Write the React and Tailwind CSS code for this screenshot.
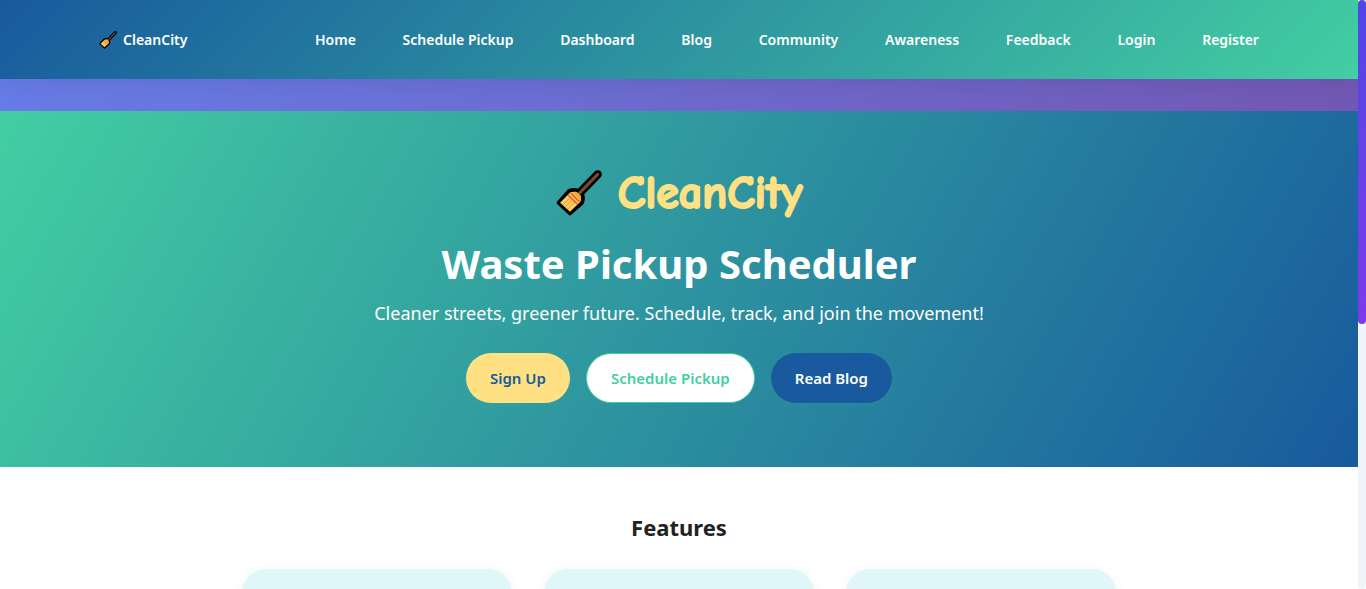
const links = ['Home', 'Schedule Pickup', 'Dashboard', 'Blog', 'Community', 'Awareness', 'Feedback', 'Login', 'Register'];
const features = ['Pickup scheduling', 'Live tracking', 'Community'];

function Broom({ className }) {
  return (
    <svg viewBox="24 14 138 138" className={className} aria-hidden="true">
      <path d="M92 86 L149 27" stroke="#000" strokeWidth="25" strokeLinecap="round" />
      <path d="M31 112 L63 76 Q78 70 91 76 L104 89 Q108 102 102 114 L66 145 Z" fill="#000" stroke="#000" strokeWidth="10" strokeLinejoin="round" />
      <path d="M92 86 L149 27" stroke="#7d4b32" strokeWidth="9" strokeLinecap="round" />
      <path d="M36 112 L67 81 Q79 77 88 82 L98 92 Q100 102 97 110 L66 139 Z" fill="#fbc04f" />
      <path d="M76 80 Q84 78 89 82 L98 91 Q101 100 97 108 Z" fill="#f5a93c" />
      <path d="M42 113 L66 88 M49 120 L73 96 M56 127 L80 103 M63 134 L88 110" stroke="#ffe39a" strokeWidth="3" />
      <path d="M46 118 L70 93 M53 125 L77 101 M60 131 L84 107" stroke="#e99a2b" strokeWidth="2" />
      <path d="M60 89 L88 117 M69 84 L94 109" stroke="#e5532d" strokeWidth="4" />
    </svg>
  );
}

export default function App() {
  return (
    <div className="flex h-screen bg-white font-['Noto_Sans','Open_Sans',sans-serif]">
      <div className="min-w-0 flex-1 overflow-hidden bg-[linear-gradient(135deg,#667eea_0%,#764ba2_100%)]">
        <header className="relative bg-[linear-gradient(135deg,#185a9d,#43cea2)] shadow-[0_4px_20px_rgba(0,0,0,0.08)]">
          <nav className="mx-auto flex h-[79px] max-w-[1160px] items-center text-sm font-semibold text-white">
            <a href="#home" className="flex w-[216px] shrink-0 items-center gap-1.5">
              <Broom className="size-[18px]" />
              CleanCity
            </a>
            <ul className="flex flex-1 justify-between">
              {links.map((label) => (
                <li key={label}>
                  <a href={'#' + label.toLowerCase().replace(' ', '-')} className="whitespace-nowrap">{label}</a>
                </li>
              ))}
            </ul>
          </nav>
        </header>
        <main className="mt-8 bg-white">
          <section className="flex flex-col items-center bg-[linear-gradient(120deg,#43cea2,#185a9d)] px-4 pt-12 pb-16 text-center text-white">
            <div className="flex h-[68px] items-center gap-4 font-['Comic_Sans_MS','Comic_Neue',Lato,sans-serif] text-[46px] font-bold text-[#ffe082] [-webkit-text-stroke:2px_#ffe082]">
              <Broom className="size-[46px]" />
              CleanCity
            </div>
            <h1 className="mt-[10px] text-[40px] leading-[54px] font-bold">Waste Pickup Scheduler</h1>
            <p className="mt-2 text-lg leading-7">Cleaner streets, greener future. Schedule, track, and join the movement!</p>
            <div className="mt-[26px] flex gap-4 text-[15px] font-semibold">
              <button className="h-[50px] rounded-full bg-[#ffe082] px-6 text-[#185a9d] shadow-[0_2px_8px_rgba(67,206,162,0.1)]">Sign Up</button>
              <button className="h-[50px] rounded-full border border-[#43cea2] bg-white px-6 text-[#43cea2]">Schedule Pickup</button>
              <button className="h-[50px] rounded-full bg-[#185a9d] px-6 text-white shadow-[0_2px_8px_rgba(67,206,162,0.1)]">Read Blog</button>
            </div>
          </section>
          <section className="px-4 pt-[42px] pb-12">
            <h2 className="text-center text-[22px] leading-9 font-bold text-[#222]">Features</h2>
            <div className="mx-auto mt-6 grid max-w-[874px] grid-cols-3 gap-8">
              {features.map((name) => (
                <article key={name} className="min-h-56 rounded-3xl bg-[#e0f7fa] shadow-[0_2px_12px_rgba(24,90,157,0.07)]" />
              ))}
            </div>
          </section>
        </main>
      </div>
      <div className="w-2 shrink-0 rounded-full bg-[#f1f5f9]">
        <div className="h-[55%] rounded-full bg-linear-to-b from-[#4f46e5] to-[#7c3aed]" />
      </div>
    </div>
  );
}
